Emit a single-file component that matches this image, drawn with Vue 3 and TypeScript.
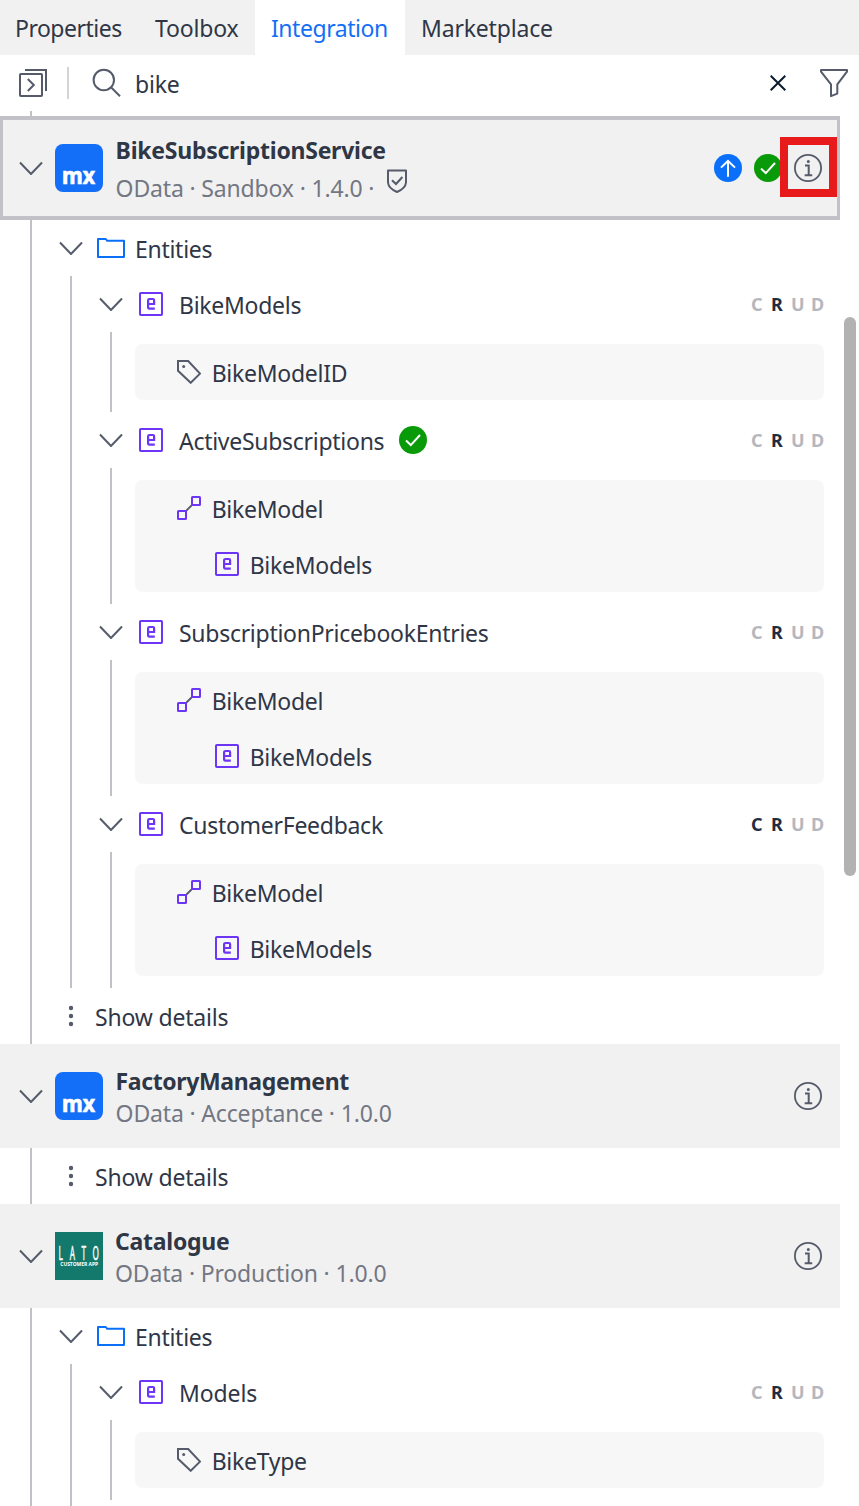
<script setup lang="ts">
interface Member {
  name: string
  icon: 'tag' | 'assoc'
  target?: string
}
interface Entity {
  name: string
  access: string
  used?: boolean
  members: Member[]
}
interface Service {
  name: string
  meta: string
  logo: 'mx' | 'lato'
  selected?: boolean
  entities: Entity[]
  details: boolean
}

const tabs = ['Properties', 'Toolbox', 'Integration', 'Marketplace']
const activeTab = 'Integration'
const letters = ['C', 'R', 'U', 'D']

const services: Service[] = [
  {
    name: 'BikeSubscriptionService',
    meta: 'OData · Sandbox · 1.4.0 ·',
    logo: 'mx',
    selected: true,
    details: true,
    entities: [
      { name: 'BikeModels', access: 'R', members: [{ name: 'BikeModelID', icon: 'tag' }] },
      {
        name: 'ActiveSubscriptions',
        access: 'R',
        used: true,
        members: [{ name: 'BikeModel', icon: 'assoc', target: 'BikeModels' }],
      },
      {
        name: 'SubscriptionPricebookEntries',
        access: 'R',
        members: [{ name: 'BikeModel', icon: 'assoc', target: 'BikeModels' }],
      },
      {
        name: 'CustomerFeedback',
        access: 'CR',
        members: [{ name: 'BikeModel', icon: 'assoc', target: 'BikeModels' }],
      },
    ],
  },
  { name: 'FactoryManagement', meta: 'OData · Acceptance · 1.0.0', logo: 'mx', details: true, entities: [] },
  {
    name: 'Catalogue',
    meta: 'OData · Production · 1.0.0',
    logo: 'lato',
    details: false,
    entities: [{ name: 'Models', access: 'R', members: [{ name: 'BikeType', icon: 'tag' }] }],
  },
]
</script>

<template>
  <div class="pane">
    <svg class="sprite" width="0" height="0" aria-hidden="true">
      <symbol id="chevron" viewBox="0 0 24 14">
        <path d="M1 1.5 12 13 23 1.5" fill="none" stroke="#555b6b" stroke-width="2" />
      </symbol>
      <symbol id="entity" viewBox="0 0 24 24">
        <rect x="1" y="1" width="22" height="22" rx="0.8" fill="none" stroke="#6d36f6" stroke-width="2" />
        <path d="M15.8 16.6H10.4Q9.1 16.6 9.1 15.4V8.3Q9.1 7 10.4 7H13.9Q15.1 7 15.1 8.3V12H9" fill="none" stroke="#6d36f6" stroke-width="2.2" />
      </symbol>
      <symbol id="tag" viewBox="0 0 24 24">
        <path d="M1 1H11.2L23 13.6 13.7 22.8 1 10.8Z" fill="none" stroke="#555b6b" stroke-width="2" />
        <circle cx="6.7" cy="6.6" r="1.5" fill="#555b6b" />
      </symbol>
      <symbol id="assoc" viewBox="0 0 24 24">
        <path d="M9 15 15 9" stroke="#555b6b" stroke-width="1.8" />
        <rect x="1" y="15" width="8" height="8" rx="0.5" fill="#f7f7f7" stroke="#6d36f6" stroke-width="2" />
        <rect x="15" y="1" width="8" height="8" rx="0.5" fill="#f7f7f7" stroke="#6d36f6" stroke-width="2" />
      </symbol>
      <symbol id="check" viewBox="0 0 28 28">
        <circle cx="14" cy="14" r="14" fill="#089a08" />
        <path d="M7 14.6 11.8 19.1 21 9" fill="none" stroke="#fff" stroke-width="2" />
      </symbol>
      <symbol id="update" viewBox="0 0 28 28">
        <circle cx="14" cy="14" r="14" fill="#0a70fa" />
        <path d="M7 13.6 14 6.8 21 13.6M14 7V22.8" fill="none" stroke="#fff" stroke-width="2" />
      </symbol>
      <symbol id="info" viewBox="0 0 28 28">
        <circle cx="14" cy="14" r="13.1" fill="none" stroke="#555b6b" stroke-width="1.8" />
        <circle cx="14.3" cy="7.4" r="1.5" fill="#555b6b" />
        <path d="M11 11.6H14.7V21.3M10.7 21.3H18.2" fill="none" stroke="#555b6b" stroke-width="2" />
      </symbol>
    </svg>

    <nav class="tabs">
      <div v-for="tab in tabs" :key="tab" class="tab" :class="[tab.toLowerCase(), { active: tab === activeTab }]">
        {{ tab }}
      </div>
    </nav>

    <div class="search">
      <svg class="collapse" width="30" height="30" viewBox="0 0 30 30" fill="none" stroke="#555b6b" stroke-width="2">
        <rect x="2" y="6" width="22" height="22" rx="0.8" />
        <path d="M7 2H28V23" />
        <path d="M9.8 11 15.8 17 9.8 23" />
      </svg>
      <span class="divider"></span>
      <svg class="glass" width="30" height="30" viewBox="0 0 30 30" fill="none" stroke="#555b6b" stroke-width="2">
        <circle cx="11.8" cy="12" r="10.2" />
        <path d="M19 19.2 28 28.2" />
      </svg>
      <span class="query">bike</span>
      <svg class="clear" width="16" height="16" viewBox="0 0 16 16" stroke="#0c1b2d" stroke-width="2">
        <path d="M.7.7 15.3 15.3M15.3.7.7 15.3" />
      </svg>
      <svg class="filter" width="30" height="30" viewBox="0 0 30 30" fill="none" stroke="#555b6b" stroke-width="2" stroke-linejoin="round">
        <path d="M2 2H28V3.6L18.3 16.4V25.6L12 28.2V16.4L2 3.6Z" />
      </svg>
    </div>

    <div class="content">
      <div class="tree">
        <div class="lead"></div>
        <section v-for="service in services" :key="service.name">
          <header class="service" :class="{ selected: service.selected }">
            <svg class="chevron" width="24" height="14"><use href="#chevron" /></svg>
            <svg v-if="service.logo === 'mx'" class="logo" width="48" height="48" viewBox="0 0 48 48">
              <rect width="48" height="48" rx="8" fill="#146ff8" />
              <text x="7" y="39.7" class="mx" textLength="33" lengthAdjust="spacingAndGlyphs">mx</text>
            </svg>
            <svg v-else class="logo" width="48" height="48" viewBox="0 0 48 48">
              <rect width="48" height="48" fill="#13796c" />
              <text transform="scale(0.4 1)" x="9 37 66 94" y="28" class="brand">LATO</text>
              <text x="5.2" y="34" class="brand-sub" textLength="38" lengthAdjust="spacingAndGlyphs">CUSTOMER APP</text>
            </svg>
            <div class="titles" :class="service.name.toLowerCase()">
              <div class="name">{{ service.name }}</div>
              <div class="meta">
                <span>{{ service.meta }}</span>
                <svg v-if="service.selected" class="shield" width="20" height="24" viewBox="0 0 20 24" fill="none" stroke="#555b6b" stroke-width="2">
                  <path d="M1 1.5H19V13.5Q18.5 19.5 10 23 1.5 19.5 1 13.5Z" stroke-linejoin="round" />
                  <path d="M5 11.2 9 15 15.4 8" />
                </svg>
              </div>
            </div>
            <div class="status">
              <svg v-if="service.selected" width="28" height="28"><use href="#update" /></svg>
              <svg v-if="service.selected" width="28" height="28"><use href="#check" /></svg>
              <span class="info">
                <svg width="28" height="28"><use href="#info" /></svg>
                <span v-if="service.selected" class="highlight"></span>
              </span>
            </div>
          </header>

          <div class="service-body">
            <template v-if="service.entities.length">
              <div class="row group">
                <svg width="24" height="14"><use href="#chevron" /></svg>
                <svg class="folder" width="28" height="20" viewBox="0 0 28 20" fill="none" stroke="#0a70fa" stroke-width="2" stroke-linejoin="round">
                  <path d="M1 1H8.8L10.2 2.8H27V19H1Z" />
                </svg>
                <span class="label">Entities</span>
              </div>
              <div class="branch">
                <template v-for="entity in service.entities" :key="entity.name">
                  <div class="row entity">
                    <svg width="24" height="14"><use href="#chevron" /></svg>
                    <svg class="entity-icon" width="24" height="24"><use href="#entity" /></svg>
                    <span class="label" :class="entity.name.toLowerCase()">{{ entity.name }}</span>
                    <svg v-if="entity.used" class="used" width="28" height="28"><use href="#check" /></svg>
                    <span class="crud">
                      <b v-for="l in letters" :key="l" :class="{ on: entity.access.includes(l) }">{{ l }}</b>
                    </span>
                  </div>
                  <div class="branch leaf">
                    <div class="card">
                      <template v-for="member in entity.members" :key="member.name">
                        <div class="row member">
                          <svg width="24" height="24"><use :href="'#' + member.icon" /></svg>
                          <span class="label">{{ member.name }}</span>
                        </div>
                        <div v-if="member.target" class="row target">
                          <svg width="24" height="24"><use href="#entity" /></svg>
                          <span class="label">{{ member.target }}</span>
                        </div>
                      </template>
                    </div>
                  </div>
                </template>
              </div>
            </template>
            <div v-if="service.details" class="row details">
              <svg width="6" height="22" viewBox="0 0 6 22" fill="#555b6b">
                <circle cx="3" cy="3" r="2.2" /><circle cx="3" cy="11" r="2.2" /><circle cx="3" cy="19" r="2.2" />
              </svg>
              <span class="label">Show details</span>
            </div>
          </div>
        </section>
      </div>
      <div class="thumb"></div>
    </div>
  </div>
</template>

<style>
body {
  background: #fff;
}
</style>

<style scoped>
.pane {
  width: 859px;
  height: 1506px;
  overflow: hidden;
  display: flex;
  flex-direction: column;
  font-family: "Noto Sans", "Open Sans", sans-serif;
  font-size: 23px;
  color: #2f3646;
}
.sprite {
  position: absolute;
}
svg {
  display: block;
  flex: none;
}
.tabs {
  display: flex;
  height: 55px;
  flex: none;
  background: #f1f1f1;
}
.tab {
  box-sizing: border-box;
  padding-left: 16px;
  line-height: 57px;
  letter-spacing: -0.18px;
  white-space: nowrap;
}
.properties {
  width: 139px;
  padding-left: 15px;
  letter-spacing: -0.5px;
}
.toolbox {
  width: 116px;
}
.integration {
  width: 150px;
  letter-spacing: -0.45px;
}
.active {
  background: #fff;
  color: #146ff8;
}
.search {
  display: flex;
  align-items: center;
  height: 56px;
  flex: none;
  padding: 0 10px 0 18px;
}
.divider {
  width: 2px;
  height: 32px;
  margin: 0 23px 0 19px;
  background: #d3d4d8;
}
.query {
  flex: 1;
  margin-left: 13px;
  padding-top: 2px;
  line-height: 58px;
  letter-spacing: -0.2px;
}
.clear {
  margin-right: 33px;
}
.content {
  display: flex;
  align-items: flex-start;
}
.tree {
  width: 840px;
  flex: none;
}
.lead {
  height: 5px;
  margin-left: 30px;
  border-left: 2px solid #c1c1c7;
}
.thumb {
  width: 12px;
  height: 559px;
  margin: 206px 0 0 4px;
  border-radius: 6px;
  background: #b2b2b2;
}
.service {
  box-sizing: border-box;
  height: 104px;
  display: flex;
  align-items: center;
  padding: 0 18px 0 19px;
  background: #f1f1f1;
}
.service.selected {
  border: solid #c1c1c7;
  border-width: 4px 3px;
  padding: 0 15px 0 16px;
}
.logo {
  margin-left: 12px;
}
.mx {
  font: 700 23px "Noto Sans", sans-serif;
  fill: #fff;
  stroke: #fff;
  stroke-width: 0.7px;
}
.brand {
  font: 400 20.5px "Noto Sans", sans-serif;
  fill: #fff;
  stroke: #fff;
  stroke-width: 0.5px;
}
.brand-sub {
  font: 700 5px "Noto Sans", sans-serif;
  fill: #fff;
}
.titles {
  flex: 1;
  margin-left: 12.6px;
  padding-top: 2px;
  white-space: nowrap;
}
.selected .titles {
  padding-top: 8px;
}
.titles.catalogue {
  margin-left: 12px;
}
.name {
  font-weight: 700;
  line-height: 32px;
  letter-spacing: -0.25px;
}
.factorymanagement .name {
  letter-spacing: -0.37px;
}
.meta {
  display: flex;
  align-items: center;
  line-height: 32px;
  letter-spacing: -0.16px;
  color: #737783;
}
.selected .meta {
  line-height: 44px;
}
.shield {
  margin: -15px 0 0 12.5px;
}
.status {
  display: flex;
  gap: 12px;
}
.info {
  position: relative;
}
.highlight {
  position: absolute;
  left: -14.5px;
  top: -17px;
  width: 41.5px;
  height: 44px;
  border: 8px solid #e71b1b;
}
.service-body {
  margin-left: 30px;
  border-left: 2px solid #c1c1c7;
}
.row {
  display: flex;
  align-items: center;
  height: 56px;
}
.label {
  padding-top: 2px;
  letter-spacing: -0.28px;
  white-space: nowrap;
}
.label.models {
  letter-spacing: -0.1px;
}
.group {
  padding-left: 27px;
}
.folder {
  margin: 0 10px 0 14px;
}
.branch {
  margin-left: 38px;
  border-left: 2px solid #c1c1c7;
}
section:last-child .service-body > .branch {
  padding-bottom: 6px;
}
.entity {
  padding: 0 15px 0 27px;
}
.entity-icon {
  margin: 0 16px;
}
.used {
  margin-left: 14.5px;
}
.crud {
  display: grid;
  grid-template-columns: repeat(3, 20px) 14px;
  margin-left: auto;
  font-size: 18px;
  color: #b5b7be;
}
.crud .on {
  color: #1f2d42;
}
.leaf {
  padding: 12px 16px 12px 23px;
}
.card {
  border-radius: 8px;
  background: #f7f7f7;
}
.member {
  gap: 10.7px;
  padding-left: 42px;
}
.target {
  gap: 10.7px;
  padding-left: 80px;
}
.details {
  gap: 21px;
  padding-left: 36px;
}
.details .label {
  letter-spacing: -0.18px;
}
</style>
